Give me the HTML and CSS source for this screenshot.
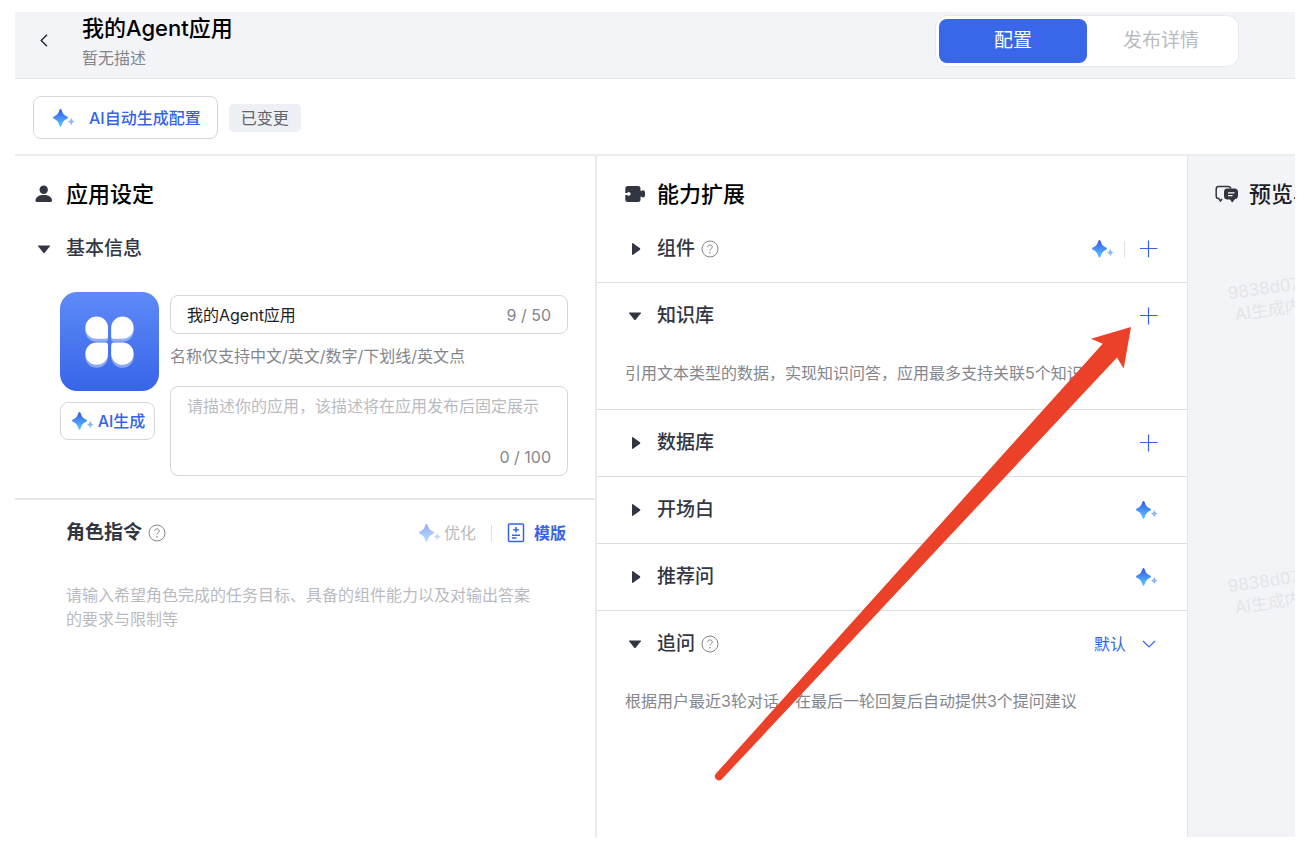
FILE: index.html
```html
<!DOCTYPE html>
<html lang="zh-CN">
<head>
<meta charset="utf-8">
<title>我的Agent应用</title>
<link rel="stylesheet" href="styles.css">
</head>
<body>
<svg class="defs" aria-hidden="true">
  <defs>
    <linearGradient id="spark-fill" x1="0" y1="0" x2="0" y2="1">
      <stop offset="0.1" stop-color="#3662ec"/>
      <stop offset="1" stop-color="#5cc8ff"/>
    </linearGradient>
    <linearGradient id="logo-fill" x1="0" y1="0" x2="0" y2="1">
      <stop offset="0" stop-color="#5f8af8"/>
      <stop offset="1" stop-color="#3765e8"/>
    </linearGradient>
    <symbol id="spark" viewBox="0 0 22 18">
      <path fill="url(#spark-fill)" d="M7.5 0C8 0 8.3.4 8.6 1.1C9.8 4.6 10.6 6 14.2 7.6C15.2 8.1 15.2 9.3 14.2 9.8C10.8 11.3 9.8 12.9 8.6 16.5C8.3 17.3 8 17.7 7.5 17.7S6.7 17.3 6.4 16.5C5.2 12.9 4.2 11.3.8 9.8C-.2 9.3-.2 8.1.8 7.6C4.4 6 5.2 4.6 6.4 1.1C6.7.4 7 0 7.5 0Z"/>
      <path fill="#8db5fb" d="M18.3 8.4C18.8 10.9 19.4 11.6 21.7 12.5C19.4 13.4 18.8 14.2 18.3 16.7C17.8 14.2 17.1 13.4 14.9 12.5C17.1 11.6 17.8 10.9 18.3 8.4Z"/>
    </symbol>
    <symbol id="plus" viewBox="0 0 18 18">
      <path d="M8.500 .5V17.5M0 8.500H17.500" fill="none" stroke="#3662ec" stroke-width="1.2"/>
    </symbol>
    <symbol id="help" viewBox="0 0 18 18">
      <circle cx="9" cy="9" r="8" fill="none" stroke="#84868c" stroke-width="1"/>
      <path d="M6.7 7.2C6.7 5.8 7.7 4.9 9 4.9S11.3 5.8 11.3 7C11.3 8.5 9 8.6 9 10.5" fill="none" stroke="#84868c" stroke-width="1"/>
      <circle cx="9" cy="12.7" r=".8" fill="#84868c"/>
    </symbol>
    <symbol id="down" viewBox="0 0 20 20"><path d="M4.500 6.500H15.500Q16.500 6.500 15.900 7.300L10.700 13.800Q10 14.500 9.300 13.800L4.100 7.300Q3.500 6.500 4.500 6.500Z" fill="#323643"/></symbol>
    <symbol id="right" viewBox="0 0 20 20"><path d="M7 5Q7 3.600 8 4.300L15 9.300Q15.700 10 15 10.700L8 15.700Q7 16.400 7 15Z" fill="#323643"/></symbol>
  </defs>
</svg>

<div class="frame">
  <header class="topbar">
    <button class="back" aria-label="返回"><svg width="8" height="13" viewBox="0 0 8 13"><path d="M7 .7L1.200 6.500L7 12.300" fill="none" stroke="#23262e" stroke-width="1.400"/></svg></button>
    <div class="app-title">
      <h1>我的Agent应用</h1>
      <p>暂无描述</p>
    </div>
    <nav class="tabs">
      <button class="tab tab-active">配置</button>
      <button class="tab">发布详情</button>
    </nav>
  </header>

  <div class="toolbar">
    <button class="outline-btn auto-btn"><svg class="spark"><use href="#spark"/></svg>AI自动生成配置</button>
    <span class="tag">已变更</span>
  </div>

  <main class="columns">
    <section class="col settings">
      <h2 class="col-title">
        <svg width="20" height="20" viewBox="0 0 20 20"><circle cx="9.700" cy="5.800" r="4.200" fill="#323643"/><path d="M1.500 16.500C1.500 13 5 11 9.700 11S18 13 18 16.500Q18 18 16.500 18H3Q1.500 18 1.500 16.500Z" fill="#323643"/></svg>
        应用设定
      </h2>
      <div class="row">
        <button class="toggle"><svg class="caret"><use href="#down"/></svg>基本信息</button>
      </div>
      <div class="profile">
        <div class="avatar">
          <svg class="logo" viewBox="0 0 99 99" role="img" aria-label="应用图标">
            <rect width="99" height="99" rx="17" fill="url(#logo-fill)"/>
            <g fill="#fff" opacity=".4" transform="translate(0 4)">
              <path d="M36.500 23.500A11.300 11.300 0 0 1 48 35V43.500Q48 45.800 45.700 45.800H36.500A11.150 11.150 0 0 1 36.500 23.500Z"/>
              <path d="M62.500 23.500A11.300 11.300 0 0 0 51.200 35V43.500Q51.200 45.800 53.500 45.800H62.500A11.150 11.150 0 0 0 62.500 23.500Z"/>
              <path d="M36.500 71.800A11.300 11.300 0 0 0 48 60.300V52Q48 49.500 45.700 49.500H36.500A11.150 11.150 0 0 0 36.500 71.800Z"/>
              <path d="M62.500 71.800A11.300 11.300 0 0 1 51.200 60.300V52Q51.200 49.500 53.500 49.500H62.500A11.150 11.150 0 0 1 62.500 71.800Z"/>
            </g>
            <g fill="#fff" transform="translate(0 1)">
              <path d="M36.500 23.500A11.300 11.300 0 0 1 48 35V43.500Q48 45.800 45.700 45.800H36.500A11.150 11.150 0 0 1 36.500 23.500Z"/>
              <path d="M62.500 23.500A11.300 11.300 0 0 0 51.200 35V43.500Q51.200 45.800 53.500 45.800H62.500A11.150 11.150 0 0 0 62.500 23.500Z"/>
              <path d="M36.500 71.800A11.300 11.300 0 0 0 48 60.300V52Q48 49.500 45.700 49.500H36.500A11.150 11.150 0 0 0 36.500 71.800Z"/>
              <path d="M62.500 71.800A11.300 11.300 0 0 1 51.200 60.300V52Q51.200 49.500 53.500 49.500H62.500A11.150 11.150 0 0 1 62.500 71.800Z"/>
            </g>
          </svg>
          <button class="outline-btn gen-btn"><svg class="spark"><use href="#spark"/></svg>AI生成</button>
        </div>
        <div class="fields">
          <div class="field field-name">
            <input type="text" value="我的Agent应用" aria-label="应用名称">
            <span class="count">9 / 50</span>
          </div>
          <p class="hint">名称仅支持中文/英文/数字/下划线/英文点</p>
          <div class="field field-desc">
            <textarea rows="2" aria-label="应用描述" placeholder="请描述你的应用，该描述将在应用发布后固定展示"></textarea>
            <span class="count">0 / 100</span>
          </div>
        </div>
      </div>
      <div class="row role-row">
        <label class="role-label" for="role">角色指令</label>
        <svg class="help"><use href="#help"/></svg>
        <div class="actions role-actions">
          <button class="text-btn optimize" disabled><svg class="spark"><use href="#spark"/></svg>优化</button>
          <i class="divider"></i>
          <button class="text-btn template"><svg width="18" height="20" viewBox="0 0 18 20" fill="none" stroke="#3662ec" stroke-width="1.500"><rect x="1.500" y="1" width="15" height="17.500" rx="1"/><path d="M9 4V9.500M6.200 6.700H11.800M5 12.300H13M5 15H9.500"/></svg>模版</button>
        </div>
      </div>
      <textarea id="role" class="role-input" rows="2" placeholder="请输入希望角色完成的任务目标、具备的组件能力以及对输出答案的要求与限制等"></textarea>
    </section>

    <section class="col abilities">
      <h2 class="col-title">
        <svg width="20" height="20" viewBox="0 0 20 20"><path d="M3 2H13Q15.500 2 15.500 4.500V7H16.500Q17 6.300 18 6.300Q20 6.300 20 8.500V11.500Q20 13.500 18 13.500Q17 13.500 16.500 12.800H15.500V15.500Q15.500 18 13 18H3Q.3 18 .3 15.500V10.900H2.300A1.800 1.800 0 1 0 2.300 8.900H.3V4.500Q.3 2 3 2Z" fill="#323643"/></svg>
        能力扩展
      </h2>
      <div class="row lined">
        <button class="toggle"><svg class="caret"><use href="#right"/></svg>组件</button>
        <svg class="help"><use href="#help"/></svg>
        <div class="actions">
          <button class="icon-btn" aria-label="智能添加组件"><svg class="spark"><use href="#spark"/></svg></button>
          <i class="divider"></i>
          <button class="icon-btn plus-btn" aria-label="添加组件"><svg class="plus"><use href="#plus"/></svg></button>
        </div>
      </div>
      <div class="lined">
        <div class="row">
          <button class="toggle"><svg class="caret"><use href="#down"/></svg>知识库</button>
          <div class="actions"><button class="icon-btn" aria-label="添加知识库"><svg class="plus"><use href="#plus"/></svg></button></div>
        </div>
        <p class="note">引用文本类型的数据，实现知识问答，应用最多支持关联5个知识库</p>
      </div>
      <div class="row lined">
        <button class="toggle"><svg class="caret"><use href="#right"/></svg>数据库</button>
        <div class="actions"><button class="icon-btn" aria-label="添加数据库"><svg class="plus"><use href="#plus"/></svg></button></div>
      </div>
      <div class="row lined">
        <button class="toggle"><svg class="caret"><use href="#right"/></svg>开场白</button>
        <div class="actions"><button class="icon-btn" aria-label="生成开场白"><svg class="spark"><use href="#spark"/></svg></button></div>
      </div>
      <div class="row lined">
        <button class="toggle"><svg class="caret"><use href="#right"/></svg>推荐问</button>
        <div class="actions"><button class="icon-btn" aria-label="生成推荐问"><svg class="spark"><use href="#spark"/></svg></button></div>
      </div>
      <div class="row">
        <button class="toggle"><svg class="caret"><use href="#down"/></svg>追问</button>
        <svg class="help"><use href="#help"/></svg>
        <div class="actions">
          <div class="select">
            <select aria-label="追问模式"><option>默认</option></select>
            <svg width="14" height="8" viewBox="0 0 14 8"><path d="M1 1L7 7L13 1" fill="none" stroke="#3662ec" stroke-width="1.200"/></svg>
          </div>
        </div>
      </div>
      <p class="note">根据用户最近3轮对话，在最后一轮回复后自动提供3个提问建议</p>
    </section>

    <section class="col preview">
      <h2 class="col-title">
        <svg width="24" height="20" viewBox="0 0 24 20"><path d="M7 15L5.500 17L3.800 14.500H3.500Q1.200 14.500 1.200 12V5Q1.200 2.500 3.700 2.500H13Q15.500 2.500 15.800 4.500" fill="none" stroke="#323643" stroke-width="1.500"/><path d="M12 4.500H19.500Q23 4.500 23 8V11.500Q23 14.800 20 15L17.800 18Q17.300 18.500 16.800 18L15 15.500H12.500Q9 15.500 9 12V8Q9 4.500 12 4.500Z" fill="#323643"/><path d="M13 8.800H19.500M13 11.600H17.500" stroke="#fff" stroke-width="1.200"/></svg>
        预览与调试
      </h2>
      <div class="watermark watermark-a"><span>9838d07</span><span>AI生成内容</span></div>
      <div class="watermark watermark-b"><span>9838d07</span><span>AI生成内容</span></div>
    </section>
  </main>

  <svg class="arrow" width="420" height="456" viewBox="0 0 420 456" aria-hidden="true">
    <path d="M419 1L379 12.700L390.700 17.700L4 447.500A4 4 0 0 0 10 453L405 31.500L411.700 42.500Z" fill="#ea4128"/>
  </svg>
</div>
</body>
</html>
```

FILE: styles.css
```css
* {
  box-sizing: border-box;
}

body {
  margin: 0;
  padding: 12px 13px 13px 15px;
  background: #fff;
  color: #323643;
  font: 16px/24px Inter, "Noto Sans CJK SC", sans-serif;
}

h1,
h2,
p {
  margin: 0;
}

button,
input,
select,
textarea {
  margin: 0;
  padding: 0;
  border: 0;
  background: none;
  color: inherit;
  font: inherit;
}

svg {
  display: block;
  flex: none;
}

.defs {
  position: absolute;
  width: 0;
  height: 0;
}

.frame {
  position: relative;
  display: flex;
  flex-direction: column;
  min-height: calc(100vh - 25px);
  overflow: hidden;
}

/* top bar */
.topbar {
  display: flex;
  align-items: flex-start;
  padding: 0 56px 8px 19px;
  border-bottom: 1px solid #e5e7ea;
  background: #f3f4f8;
}

.back {
  display: grid;
  place-items: center;
  width: 20px;
  height: 57px;
}

.app-title {
  flex: 1;
  padding-left: 28px;
  color: #84868c;
}

.app-title h1 {
  margin-bottom: 2px;
  color: #000;
  font-size: 22px;
  font-weight: 500;
  line-height: 32px;
}

.tabs {
  display: flex;
  margin: 3px 0 -8px;
  padding: 3px;
  border: 1px solid #e8e9ec;
  border-radius: 12px;
  background: #fff;
}

.tab {
  width: 148px;
  height: 44px;
  border-radius: 8px;
  color: #b9bbc1;
  font-size: 19px;
}

.tab-active {
  background: #3868e9;
  color: #fff;
}

/* toolbar */
.toolbar {
  display: flex;
  align-items: center;
  gap: 11px;
  padding: 17px 18px 15px;
  border-bottom: 2px solid #ebecee;
}

.outline-btn {
  display: flex;
  align-items: center;
  justify-content: center;
  border: 1px solid #d5d6da;
  border-radius: 8px;
  background: #fff;
  color: #3662ec;
  font-weight: 500;
}

.auto-btn {
  gap: 14px;
  height: 43px;
  padding: 0 16px 0 19px;
}

.tag {
  padding: 2px 12px;
  border-radius: 5px;
  background: #edf0f4;
  color: #626469;
}

.spark {
  width: 22px;
  height: 18px;
}

.plus,
.help {
  width: 18px;
  height: 18px;
}

.caret {
  width: 20px;
  height: 20px;
}

/* columns */
.columns {
  flex: 1;
  display: grid;
  grid-template-columns: minmax(0, 582fr) minmax(0, 591fr) minmax(0, 107fr);
}

.settings {
  border-right: 2px solid #ebebed;
}

.abilities {
  border-right: 1px solid #e3e4e7;
}

.col-title {
  display: flex;
  align-items: center;
  gap: 12px;
  height: 60px;
  padding: 16px 0 0 28px;
  color: #000;
  font-size: 22px;
  font-weight: 500;
  white-space: nowrap;
}

.row {
  display: flex;
  align-items: center;
  min-height: 66px;
  padding: 0 29px 0 28px;
}

.settings .col-title,
.settings .row {
  padding-left: 19px;
}

.lined {
  border-bottom: 1px solid #dcdde0;
}

.row.lined {
  min-height: 67px;
}

.toggle {
  display: flex;
  align-items: center;
  gap: 12px;
  font-size: 19px;
  font-weight: 500;
  line-height: 26px;
}

.help {
  margin-left: 6px;
}

.actions {
  display: flex;
  align-items: center;
  margin-left: auto;
}

.divider {
  width: 1px;
  height: 17px;
  margin: 0 10px;
  background: #dfe0e3;
}

.plus-btn {
  margin-left: 5px;
}

.note {
  padding: 12px 29px 24px 28px;
  color: #84868c;
}

.select {
  display: grid;
  align-items: center;
  width: 64px;
  color: #3662ec;
}

.select select {
  grid-area: 1 / 1;
  width: 100%;
  appearance: none;
}

.select svg {
  grid-area: 1 / 1;
  justify-self: end;
  margin-right: 2px;
  pointer-events: none;
}

/* basic information */
.profile {
  display: flex;
  gap: 11px;
  padding: 10px 27px 22px 45px;
  border-bottom: 2px solid #e6e7e9;
}

.logo {
  width: 99px;
  height: 99px;
}

.gen-btn {
  gap: 4px;
  width: 95px;
  height: 38px;
  margin-top: 11px;
  padding-left: 2px;
}

.fields {
  flex: 1;
  min-width: 0;
  padding-top: 3px;
}

.field {
  display: flex;
  padding: 0 16px;
  border: 1px solid #d5d6da;
  border-radius: 8px;
}

.field-name {
  align-items: center;
  height: 39px;
}

.field-name input {
  flex: 1;
  min-width: 0;
  color: #1b1e27;
}

.field-desc {
  flex-direction: column;
  padding-top: 7px;
  padding-bottom: 6px;
}

.count {
  color: #84868c;
  text-align: right;
}

.hint {
  padding: 10px 0 18px;
  color: #84868c;
}

textarea {
  display: block;
  resize: none;
}

.field-desc textarea {
  height: 51px;
}

::placeholder {
  color: #b9bbc1;
  opacity: 1;
}

/* role prompt */
.settings .role-row {
  padding-left: 51px;
}

.role-label {
  font-size: 19px;
  font-weight: 700;
  line-height: 26px;
}

.role-actions {
  gap: 5px;
}

.text-btn {
  display: flex;
  align-items: center;
  color: #3662ec;
}

.optimize {
  gap: 3px;
  color: #b9bbc1;
}

.optimize .spark {
  opacity: 0.5;
}

.template {
  gap: 9px;
  font-weight: 700;
}

.role-input {
  width: calc(100% - 104px);
  height: 48px;
  margin: 17px 53px 0 51px;
}

/* preview */
.preview {
  position: relative;
  overflow: hidden;
  background: #f3f4f8;
}

.preview .col-title {
  gap: 10px;
  padding-left: 27px;
  color: #1b1e27;
}

.watermark {
  position: absolute;
  left: 41px;
  display: flex;
  flex-direction: column;
  align-items: center;
  color: #e4e5e9;
  font-size: 17px;
  line-height: 22px;
  white-space: nowrap;
  transform: rotate(-8deg);
}

.watermark span:first-child {
  align-self: flex-start;
}

.watermark span:last-child {
  padding-left: 4px;
}

.watermark-a {
  top: 120px;
}

.watermark-b {
  top: 413px;
}

.arrow {
  position: absolute;
  top: 314px;
  left: 697px;
  pointer-events: none;
}
```
